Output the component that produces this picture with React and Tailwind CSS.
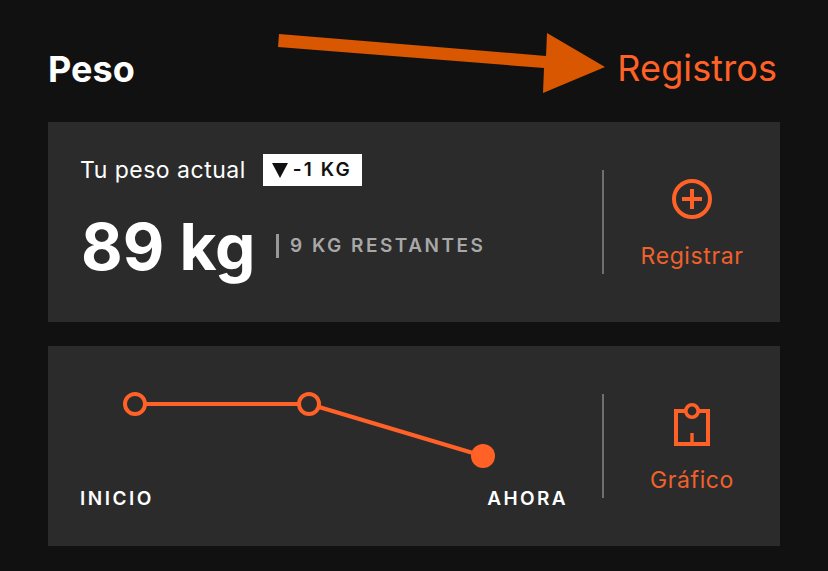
import React from 'react';

const font = { fontFamily: 'Inter, sans-serif' };

function Arrow() {
  return (
    <svg className="absolute left-[270px] top-[25px]" width="345" height="75" viewBox="270 25 345 75">
      <polygon points="279,34 546,56 547,33 605,67 543,93 544,68 278,47" fill="#d95700" />
    </svg>
  );
}

function PlusIcon() {
  return (
    <svg width="42" height="42" viewBox="0 0 42 42" fill="none" stroke="#ff6127">
      <circle cx="21" cy="21" r="18" strokeWidth="4" />
      <path d="M21 11v20M11 21h20" strokeWidth="4" />
    </svg>
  );
}

function ChartIcon() {
  return (
    <svg width="36" height="44" viewBox="0 0 36 44" fill="none" stroke="#ff6127" strokeWidth="4">
      <path d="M11 8H2v33h32V8h-9" />
      <circle cx="18" cy="8" r="6.2" strokeWidth="3.6" />
      <path d="M18 41V30" strokeWidth="3.4" />
    </svg>
  );
}

function ActionColumn({ icon, label, className }) {
  return (
    <div className={`w-[176px] flex flex-col items-center ${className}`}>
      {icon}
      <span className="text-[23px] leading-[28px] tracking-[0.6px] text-[#f0612b]">{label}</span>
    </div>
  );
}

export default function App() {
  return (
    <div style={font} className="relative w-[828px] h-[571px] overflow-hidden bg-[#111111] px-[48px]">
      <Arrow />
      <div className="h-[122px] flex items-start justify-between">
        <h1 className="mt-[47px] text-[36px] leading-[44px] font-bold text-white">Peso</h1>
        <span className="mt-[45px] mr-[3px] text-[36px] leading-[46px] tracking-[0.1px] text-[#ff6127]">Registros</span>
      </div>

      <div className="h-[200px] bg-[#2b2b2b] flex items-center">
        <div className="flex-1 self-start pl-[33px] pt-[32px]">
          <div className="flex items-center gap-[17px] -ml-px">
            <span className="text-[23px] leading-[32px] tracking-[0.5px] text-white">Tu peso actual</span>
            <span className="h-[32px] w-[99px] pl-[9px] bg-white flex items-center gap-[5px] text-[#111111] text-[19px] font-semibold tracking-[2.1px]">
              <svg width="16" height="15" viewBox="0 0 16 15"><polygon points="0,0 16,0 8,15" fill="#111111" /></svg>
              -1 KG
            </span>
          </div>
          <div className="flex items-center mt-[23px]">
            <span className="text-[64px] leading-[76px] font-bold text-white w-[195px]">89 kg</span>
            <span className="w-[3px] h-[24px] bg-[#999999] mr-[11px] mb-[2px]" />
            <span className="text-[19px] leading-[24px] font-semibold tracking-[2.5px] text-[#a8a8a8] mb-[2px]">9 KG RESTANTES</span>
          </div>
        </div>
        <div className="w-[2px] h-[104px] bg-[#6f6f6f]" />
        <ActionColumn icon={<PlusIcon />} label="Registrar" className="gap-[22px] pt-[4px]" />
      </div>

      <div className="mt-[24px] h-[200px] bg-[#2b2b2b] flex items-center">
        <div className="flex-1 self-start pl-[32px] pr-[34px] pt-[46px]">
          <svg className="block ml-[43px]" width="372" height="76" viewBox="0 0 372 76" fill="none" stroke="#ff6127" strokeWidth="4">
            <path d="M22 12h154M196 15l154 46" />
            <circle cx="12" cy="12" r="10" />
            <circle cx="186" cy="12" r="10" />
            <circle cx="360" cy="64" r="12" fill="#ff6127" stroke="none" />
          </svg>
          <div className="flex justify-between mt-[19px]">
            <span className="text-[19px] leading-[24px] font-semibold tracking-[2.5px] text-white">INICIO</span>
            <span className="text-[19px] leading-[24px] font-semibold tracking-[2.4px] text-white">AHORA</span>
          </div>
        </div>
        <div className="w-[2px] h-[104px] bg-[#6f6f6f]" />
        <ActionColumn icon={<ChartIcon />} label="Gráfico" className="gap-[19px] pt-[5px]" />
      </div>
    </div>
  );
}
